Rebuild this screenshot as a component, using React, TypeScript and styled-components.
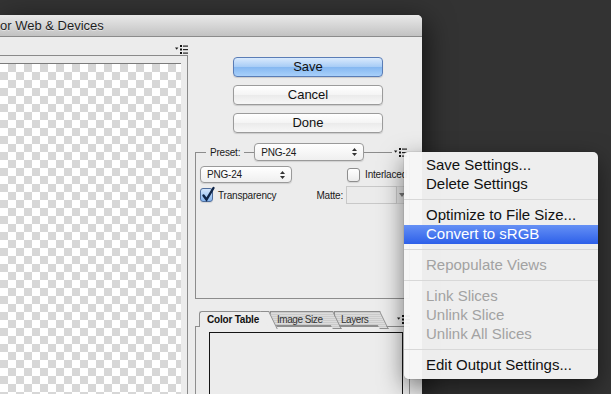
import styled, { createGlobalStyle } from "styled-components";

const GlobalStyle = createGlobalStyle`
  html, body {
    margin: 0;
    padding: 0;
    background: #333333;
  }
  body {
    font-family: "Liberation Sans", Arial, sans-serif;
    overflow: hidden;
  }
  * {
    box-sizing: border-box;
  }
`;

const Desktop = styled.div`
  position: relative;
  width: 611px;
  height: 394px;
  padding-top: 15px;
  background: #333333;
  overflow: hidden;
`;

const Window = styled.div`
  width: 422px;
  height: 379px;
  display: flex;
  flex-direction: column;
  background: #ececec;
  border-top-right-radius: 5px;
  overflow: hidden;
  box-shadow: 4px 6px 28px rgba(0, 0, 0, 0.6);
`;

const TitleBar = styled.div`
  flex: none;
  height: 22px;
  display: flex;
  align-items: center;
  padding-bottom: 1px;
  background: linear-gradient(#e9e9e9, #c2c2c2);
  border-bottom: 1px solid #8b8b8b;
  font-size: 13px;
  color: #1e1e1e;
  white-space: nowrap;
`;

const Title = styled.span`
  margin-left: 0;
  text-shadow: 0 1px 0 rgba(255, 255, 255, 0.45);
`;

const Body = styled.div`
  flex: 1;
  display: flex;
  min-height: 0;
`;

const PreviewColumn = styled.div`
  flex: none;
  width: 188px;
  display: flex;
  flex-direction: column;
`;

const PanelMenuRow = styled.div`
  flex: none;
  height: 18px;
  display: flex;
  justify-content: flex-end;
  align-items: flex-start;
  padding-top: 8px;
`;

const PreviewFrame = styled.div`
  flex: 1;
  display: flex;
  padding: 7px 6px 0 0;
  border-top: 1px solid #8a8a8a;
  border-right: 1px solid #8a8a8a;
`;

const Checker = styled.div`
  flex: 1;
  border-top: 1px solid #7c7c7c;
  background-color: #ffffff;
  background-image: linear-gradient(45deg, #d7d7d7 25%, transparent 25%, transparent 75%, #d7d7d7 75%),
    linear-gradient(45deg, #d7d7d7 25%, transparent 25%, transparent 75%, #d7d7d7 75%);
  background-size: 16px 16px;
  background-position: 0 0, 8px 8px;
`;

const SettingsColumn = styled.div`
  flex: 1;
  display: flex;
  flex-direction: column;
  padding: 20px 0 0 7px;
  min-height: 0;
`;

const ButtonStack = styled.div`
  display: flex;
  flex-direction: column;
  gap: 8px;
  width: 150px;
  margin-left: 38px;
`;

const PushButton = styled.button<{ $primary?: boolean }>`
  appearance: none;
  height: 20px;
  padding: 0 0 1px;
  border-radius: 4px;
  font-family: inherit;
  font-size: 13px;
  color: #111;
  border: 1px solid ${(p) => (p.$primary ? "#5a7db6" : "#9b9b9b")};
  background: ${(p) =>
    p.$primary
      ? "linear-gradient(#d9eafd 0%, #a9cdf6 48%, #86b8f1 52%, #a8d0fa 100%)"
      : "linear-gradient(#ffffff 0%, #f4f4f4 50%, #ebebeb 52%, #f7f7f7 100%)"};
  box-shadow: 0 1px 1px rgba(0, 0, 0, 0.14);
`;

const GroupBox = styled.div`
  margin-top: 19px;
  width: 215px;
  height: 147px;
  flex: none;
  border: 1px solid #8c8c8c;
  padding: 0 2px 0 4px;
  font-size: 10px;
  letter-spacing: -0.2px;
  color: #1a1a1a;
`;

const GroupHeader = styled.div`
  height: 18px;
  margin: -10px 0 0 -4px;
  display: flex;
  align-items: center;
  gap: 10px;
  padding-left: 10px;
`;

const Legend = styled.span`
  background: #ececec;
  padding: 0 4px;
`;

const IconPad = styled.span`
  margin-left: auto;
  display: flex;
  background: #ececec;
  padding: 0 0 0 2px;
`;

const Select = styled.div<{ $w: number; $h: number }>`
  width: ${(p) => p.$w}px;
  height: ${(p) => p.$h}px;
  display: flex;
  align-items: center;
  justify-content: space-between;
  padding: 0 6px 0 6px;
  border: 1px solid #9a9a9a;
  border-radius: 4px;
  background: linear-gradient(#ffffff, #efefef);
  box-shadow: 0 1px 1px rgba(0, 0, 0, 0.12);
`;

const OptionRow = styled.div<{ $gap: number }>`
  margin-top: ${(p) => p.$gap}px;
  display: flex;
  align-items: center;
  justify-content: space-between;
`;

const CheckLabel = styled.label`
  display: flex;
  align-items: center;
  gap: 5px;
`;

const CheckBox = styled.span<{ $checked?: boolean }>`
  position: relative;
  width: 13px;
  height: 14px;
  border-radius: 3px;
  border: 1px solid ${(p) => (p.$checked ? "#4e6d9c" : "#8e8e8e")};
  background: ${(p) =>
    p.$checked ? "linear-gradient(#d3e6fc, #86b6f0)" : "linear-gradient(#ffffff, #ececec)"};
  box-shadow: 0 1px 1px rgba(0, 0, 0, 0.1);
  svg {
    position: absolute;
    left: 0;
    top: -3px;
  }
`;

const MatteGroup = styled.div`
  display: flex;
  align-items: center;
`;

const MatteLabel = styled.span`
  margin-right: 3px;
`;

const MatteField = styled.div`
  width: 51px;
  height: 18px;
  border: 1px solid #c8c8c8;
  background: #ebebeb;
`;

const MatteArrow = styled.div`
  width: 10px;
  height: 18px;
  display: flex;
  align-items: center;
  justify-content: center;
  border: 1px solid #d3d3d3;
  border-left: none;
  background: #e6e6e6;
`;

const TabStrip = styled.div`
  margin-top: 12px;
  width: 215px;
  height: 15px;
  flex: none;
  display: flex;
  align-items: flex-end;
  padding-left: 4px;
  font-size: 10px;
  letter-spacing: -0.4px;
`;

const Tab = styled.div<{ $active?: boolean; $w: number; $z: number }>`
  position: relative;
  z-index: ${(p) => p.$z};
  width: ${(p) => p.$w}px;
  height: ${(p) => (p.$active ? 16 : 15)}px;
  margin-bottom: ${(p) => (p.$active ? -1 : 0)}px;
  margin-right: 2px;
  padding: 2px 0 0 ${(p) => (p.$active ? 7 : 6)}px;
  align-self: flex-start;
  border: 1px solid #8e8e8e;
  border-right: none;
  border-bottom: ${(p) => (p.$active ? "none" : "1px solid #8e8e8e")};
  border-top-left-radius: ${(p) => (p.$active ? 3 : 0)}px;
  font-weight: ${(p) => (p.$active ? 700 : 400)};
  letter-spacing: ${(p) => (p.$active ? -0.2 : -0.45)}px;
  color: ${(p) => (p.$active ? "#111" : "#333")};
  white-space: nowrap;
  background: ${(p) =>
    p.$active ? "#ececec" : "repeating-linear-gradient(#cbcbcb 0 1px, #dcdcdc 1px 2px)"};
  &::after {
    content: "";
    position: absolute;
    top: -1px;
    left: calc(100% - 8px);
    width: 8px;
    height: ${(p) => (p.$active ? 17 : 16)}px;
    border-top: 1px solid #8e8e8e;
    border-right: 1px solid #8e8e8e;
    border-bottom: ${(p) => (p.$active ? "none" : "1px solid #8e8e8e")};
    background: inherit;
    transform: skewX(26deg);
    transform-origin: top left;
  }
`;

const TabMenu = styled.span`
  margin-left: auto;
  display: flex;
  padding-bottom: 2px;
`;

const TabPanel = styled.div`
  flex: 1;
  width: 215px;
  display: flex;
  padding: 5px 0 0 13px;
  border-top: 1px solid #8e8e8e;
  border-left: 1px solid #8e8e8e;
  border-right: 1px solid #8e8e8e;
`;

const ColorTableBox = styled.div`
  width: 194px;
  border: 1px solid #151515;
  border-bottom: none;
`;

const Menu = styled.div`
  position: absolute;
  left: 404px;
  top: 152px;
  width: 194px;
  padding: 4px 0;
  border-radius: 4px 5px 5px 5px;
  background: rgba(246, 246, 246, 0.96);
  box-shadow: 0 8px 24px rgba(0, 0, 0, 0.5), 0 0 0 1px rgba(0, 0, 0, 0.06);
  font-size: 15px;
`;

const MenuItem = styled.div<{ $state?: "active" | "disabled" }>`
  height: 19px;
  line-height: 17px;
  padding-left: 22px;
  white-space: nowrap;
  color: ${(p) => (p.$state === "active" ? "#ffffff" : p.$state === "disabled" ? "#a2a2a2" : "#111111")};
  background: ${(p) => (p.$state === "active" ? "linear-gradient(#6590f5, #2d60e9)" : "transparent")};
`;

const Separator = styled.div`
  height: 1px;
  margin: 5px 0 6px;
  background: #d8d8d8;
`;

function FlyoutIcon() {
  return (
    <svg width="13" height="9" viewBox="0 0 13 9">
      <path d="M0 2.5h3.4L1.7 4.8z" fill="#1a1a1a" />
      <rect x="5" y="0" width="2" height="2" fill="#111" />
      <rect x="5" y="3.5" width="2" height="2" fill="#111" />
      <rect x="5" y="7" width="2" height="2" fill="#111" />
      <rect x="8" y="0.5" width="5" height="1.2" fill="#222" />
      <rect x="8" y="4" width="5" height="1.2" fill="#222" />
      <rect x="8" y="7.5" width="5" height="1.2" fill="#222" />
    </svg>
  );
}

function UpDownArrows() {
  return (
    <svg width="5" height="8" viewBox="0 0 5 8">
      <path d="M0 3h5L2.5 0z" fill="#333" />
      <path d="M0 5h5L2.5 8z" fill="#333" />
    </svg>
  );
}

function CheckMark() {
  return (
    <svg width="15" height="16" viewBox="0 0 15 16">
      <path d="M2.5 9.5 L5.5 13.5 L12.5 2" fill="none" stroke="#0f2548" strokeWidth="2.4" strokeLinecap="round" />
    </svg>
  );
}

export default function App() {
  return (
    <>
      <GlobalStyle />
      <Desktop>
        <Window>
          <TitleBar>
            <Title>or Web &amp; Devices</Title>
          </TitleBar>
          <Body>
            <PreviewColumn>
              <PanelMenuRow>
                <FlyoutIcon />
              </PanelMenuRow>
              <PreviewFrame>
                <Checker />
              </PreviewFrame>
            </PreviewColumn>

            <SettingsColumn>
              <ButtonStack>
                <PushButton $primary>Save</PushButton>
                <PushButton>Cancel</PushButton>
                <PushButton>Done</PushButton>
              </ButtonStack>

              <GroupBox>
                <GroupHeader>
                  <Legend>Preset:</Legend>
                  <Select $w={110} $h={18}>
                    <span>PNG-24</span>
                    <UpDownArrows />
                  </Select>
                  <IconPad>
                    <FlyoutIcon />
                  </IconPad>
                </GroupHeader>

                <OptionRow $gap={5}>
                  <Select $w={92} $h={17}>
                    <span>PNG-24</span>
                    <UpDownArrows />
                  </Select>
                  <CheckLabel>
                    <CheckBox />
                    <span>Interlaced</span>
                  </CheckLabel>
                </OptionRow>

                <OptionRow $gap={3}>
                  <CheckLabel>
                    <CheckBox $checked>
                      <CheckMark />
                    </CheckBox>
                    <span>Transparency</span>
                  </CheckLabel>
                  <MatteGroup>
                    <MatteLabel>Matte:</MatteLabel>
                    <MatteField />
                    <MatteArrow>
                      <svg width="6" height="4" viewBox="0 0 6 4">
                        <path d="M0 0h6L3 4z" fill="#777" />
                      </svg>
                    </MatteArrow>
                  </MatteGroup>
                </OptionRow>
              </GroupBox>

              <TabStrip>
                <Tab $active $w={69} $z={3}>
                  Color Table
                </Tab>
                <Tab $w={62} $z={2}>
                  Image Size
                </Tab>
                <Tab $w={45} $z={1}>
                  Layers
                </Tab>
                <TabMenu>
                  <FlyoutIcon />
                </TabMenu>
              </TabStrip>
              <TabPanel>
                <ColorTableBox />
              </TabPanel>
            </SettingsColumn>
          </Body>
        </Window>

        <Menu>
          <MenuItem>Save Settings...</MenuItem>
          <MenuItem>Delete Settings</MenuItem>
          <Separator />
          <MenuItem>Optimize to File Size...</MenuItem>
          <MenuItem $state="active">Convert to sRGB</MenuItem>
          <Separator />
          <MenuItem $state="disabled">Repopulate Views</MenuItem>
          <Separator />
          <MenuItem $state="disabled">Link Slices</MenuItem>
          <MenuItem $state="disabled">Unlink Slice</MenuItem>
          <MenuItem $state="disabled">Unlink All Slices</MenuItem>
          <Separator />
          <MenuItem>Edit Output Settings...</MenuItem>
        </Menu>
      </Desktop>
    </>
  );
}
